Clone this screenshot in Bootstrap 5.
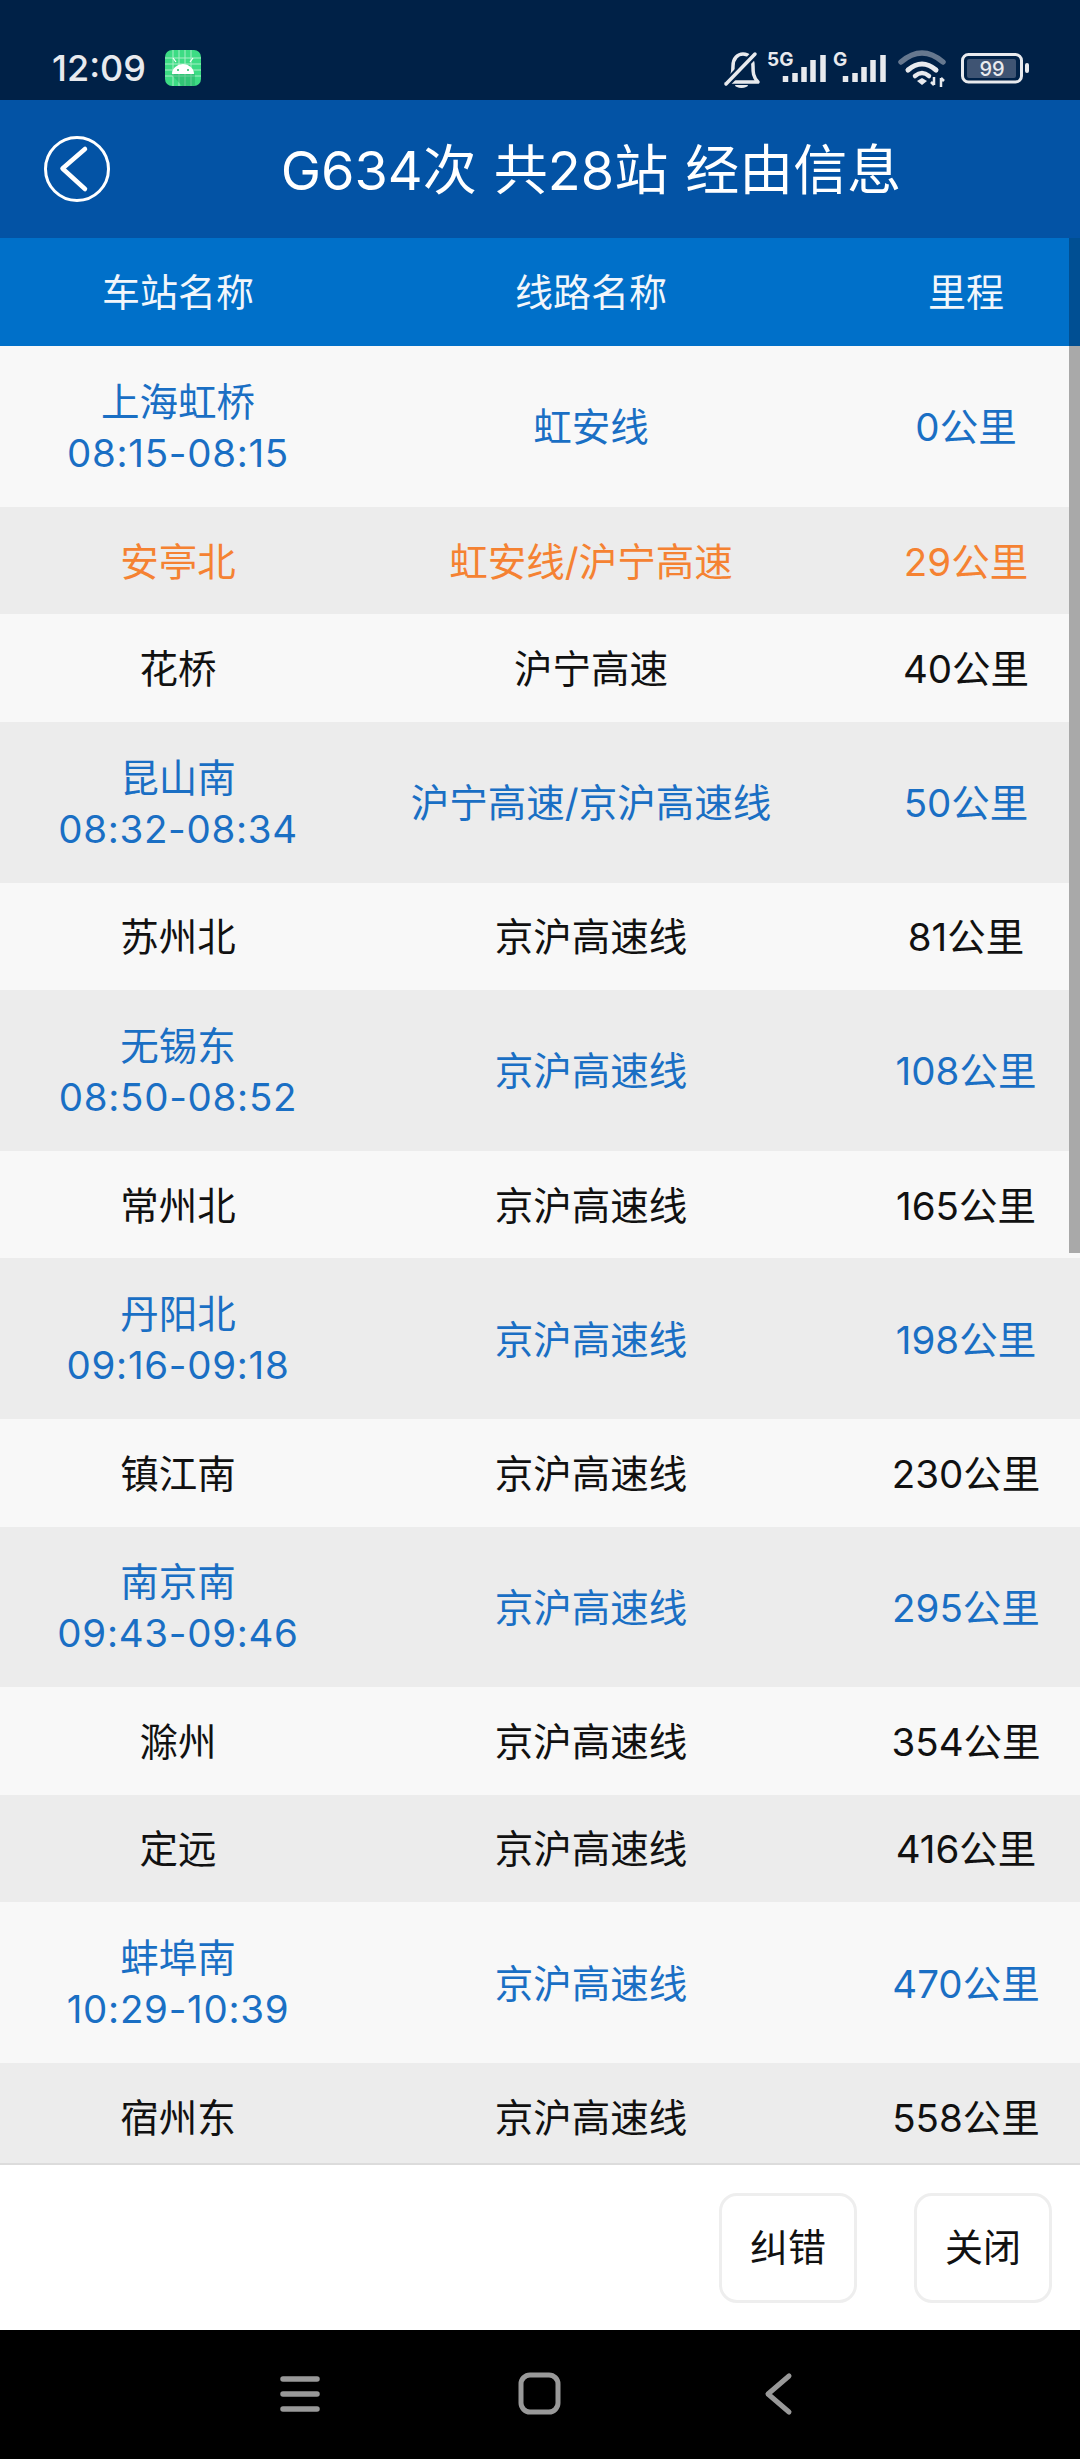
<!DOCTYPE html>
<html lang="zh-CN">
<head>
  <meta charset="UTF-8">
  <title>G634次 经由信息</title>
  <link href="https://cdn.jsdelivr.net/npm/bootstrap@5.3.3/dist/css/bootstrap.min.css" rel="stylesheet">
  <style>
    html, body {
      height: 2460px;
      overflow: hidden;
    }
    body {
      font-family: Inter, "Noto Sans CJK SC", sans-serif;
      background-color: #fff;
    }
    .phone-status {
      height: 100px;
      background-color: #002147;
      color: #e8eaee;
      padding: 50px 50px 0 52px;
    }
    .status-time {
      font-size: 36px;
      font-weight: 500;
      line-height: 36px;
      width: 113px;
    }
    .status-icons { margin-top: -10px; }
    .title-bar {
      height: 138px;
      background-color: #0353a5;
      color: #fff;
    }
    .back-btn {
      left: 44px;
      top: 36px;
    }
    .title-text {
      font-size: 54px;
      line-height: 142px;
      margin-left: 102px;
      word-spacing: 2px;
    }
    .col-station { width: 356px; }
    .col-line { width: 470px; }
    .col-miles { width: 254px; padding-left: 26px; padding-right: 0; }
    .head-row {
      height: 108px;
      background-color: #0070c9;
      color: #f2f6fb;
      font-size: 38px;
    }
    .stop-list {
      height: 1819px;
      font-size: 38.500px;
      line-height: 51px;
      color: #111;
      border-bottom: 2px solid #dcdcdc;
    }
    .stop-row { height: 107.400px; padding-top: 3px; background-color: #f8f8f8; }
    .stop-row:nth-child(even) { background-color: #ececec; }
    .stop-row.is-tall { height: 160.900px; color: #1a6fc4; }
    .stop-row.is-pass { color: #f58232; }
    .stop-time { letter-spacing: .7px; }
    .scroll-thumb {
      top: 0;
      right: 0;
      width: 11px;
      height: 1015px;
      background: linear-gradient(#004f93 108px, #a9a9a9 108px);
    }
    .foot-bar {
      height: 165px;
      padding-right: 28px;
      gap: 57px;
    }
    .foot-btn {
      width: 138px;
      height: 110px;
      font-size: 38px;
      color: #111;
      border: 3px solid #eee;
      border-radius: 18px;
      padding: 0;
    }
    .nav-strip {
      height: 129px;
      background-color: #000;
    }
  </style>
</head>
<body>

<!-- Status bar -->
<div class="phone-status d-flex align-items-start">
  <div class="status-time">12:09</div>
  <svg width="36" height="36" viewBox="0 0 36 36">
    <rect width="36" height="36" rx="7" fill="#3ddc84"/>
    <path d="M8 0V36M14 0V36M20 0V36M26 0V36M0 8H36M0 14H36M0 20H36M0 26H36" stroke="#a8efc6" stroke-width="1"/>
    <path d="M6 24H30L30 36H17Z" fill="#24a866" opacity=".45"/>
    <path d="M7 24A11 10 0 0 1 29 24Z" fill="#fff"/>
    <path d="M11 12L8 8M25 12L28 8" stroke="#fff" stroke-width="1.200"/>
    <circle cx="13" cy="20" r="1" fill="#2b6"/>
    <circle cx="23" cy="20" r="1" fill="#2b6"/>
  </svg>
  <svg class="status-icons ms-auto" width="310" height="60" viewBox="720 40 310 60" fill="none">
    <!-- muted bell -->
    <path d="M726 82C733 77 733 72 733 66C733 58 738 54 743 54C749 54 753 58 753 66C753 72 753 77 758 82Z" stroke="#e8eaee" stroke-width="3.500" stroke-linejoin="round"/>
    <path d="M726 84L757 52" stroke="#002147" stroke-width="8"/>
    <path d="M726 84L755 54" stroke="#e8eaee" stroke-width="3.500" stroke-linecap="round"/>
    <path d="M735 85H748A6.500 3 0 0 1 735 85Z" fill="#e8eaee"/>
    <!-- signal 1 -->
    <text x="767" y="66" fill="#e8eaee" font-family="Inter" font-weight="700" font-size="19">5G</text>
    <path d="M785.500 76V82M795 73V82M804 67V82M813 60V82M823 55V82" stroke="#e8eaee" stroke-width="5.500"/>
    <!-- signal 2 -->
    <text x="833" y="66" fill="#e8eaee" font-family="Inter" font-weight="700" font-size="19">G</text>
    <path d="M845.500 76V82M855 73V82M864 67V82M873 60V82M883 55V82" stroke="#e8eaee" stroke-width="5.500"/>
    <!-- wifi -->
    <path d="M901 62Q922 44 943 62" stroke="#66788f" stroke-width="5.500" stroke-linecap="round"/>
    <path d="M908 70Q922 58 936 70" stroke="#e8eaee" stroke-width="5" stroke-linecap="round"/>
    <path d="M915 76Q922 70 929 76" stroke="#e8eaee" stroke-width="4.500" stroke-linecap="round"/>
    <path d="M917 81L922 78L927 81L922 85Z" fill="#e8eaee"/>
    <path d="M934 77V85M931 82L934 85M941 87V78M941 78L944 81" stroke="#e8eaee" stroke-width="2.500"/>
    <!-- battery -->
    <rect x="962.500" y="54.500" width="59" height="27.500" rx="6" stroke="#e8eaee" stroke-width="3"/>
    <rect x="967" y="59" width="49" height="19" rx="2" fill="#3f5473"/>
    <text x="992" y="76" fill="#e8eaee" text-anchor="middle" font-family="Inter" font-weight="500" font-size="20">99</text>
    <rect x="1025" y="63" width="4" height="10" rx="2" fill="#e8eaee"/>
  </svg>
</div>

<!-- Title -->
<div class="title-bar position-relative text-center">
  <svg class="back-btn position-absolute" width="66" height="66" viewBox="0 0 66 66" fill="none" stroke="#fff">
    <circle cx="33" cy="33" r="31.500" stroke-width="3"/>
    <path d="M41 13L18.500 32.500L41 53" stroke-width="4.500" stroke-linecap="round" stroke-linejoin="round"/>
  </svg>
  <div class="title-text">G634次 共28站 经由信息</div>
</div>

<div class="position-relative">
  <!-- Table head -->
  <div class="head-row d-flex align-items-center text-center">
    <div class="col-station">车站名称</div>
    <div class="col-line">线路名称</div>
    <div class="col-miles">里程</div>
  </div>

  <!-- Stops -->
  <div class="stop-list overflow-hidden">
    <div class="stop-row is-tall d-flex align-items-center text-center">
      <div class="col-station">上海虹桥<br><span class="stop-time">08:15-08:15</span></div><div class="col-line">虹安线</div><div class="col-miles">0公里</div>
    </div>
    <div class="stop-row is-pass d-flex align-items-center text-center">
      <div class="col-station">安亭北</div><div class="col-line">虹安线/沪宁高速</div><div class="col-miles">29公里</div>
    </div>
    <div class="stop-row d-flex align-items-center text-center">
      <div class="col-station">花桥</div><div class="col-line">沪宁高速</div><div class="col-miles">40公里</div>
    </div>
    <div class="stop-row is-tall d-flex align-items-center text-center">
      <div class="col-station">昆山南<br><span class="stop-time">08:32-08:34</span></div><div class="col-line">沪宁高速/京沪高速线</div><div class="col-miles">50公里</div>
    </div>
    <div class="stop-row d-flex align-items-center text-center">
      <div class="col-station">苏州北</div><div class="col-line">京沪高速线</div><div class="col-miles">81公里</div>
    </div>
    <div class="stop-row is-tall d-flex align-items-center text-center">
      <div class="col-station">无锡东<br><span class="stop-time">08:50-08:52</span></div><div class="col-line">京沪高速线</div><div class="col-miles">108公里</div>
    </div>
    <div class="stop-row d-flex align-items-center text-center">
      <div class="col-station">常州北</div><div class="col-line">京沪高速线</div><div class="col-miles">165公里</div>
    </div>
    <div class="stop-row is-tall d-flex align-items-center text-center">
      <div class="col-station">丹阳北<br><span class="stop-time">09:16-09:18</span></div><div class="col-line">京沪高速线</div><div class="col-miles">198公里</div>
    </div>
    <div class="stop-row d-flex align-items-center text-center">
      <div class="col-station">镇江南</div><div class="col-line">京沪高速线</div><div class="col-miles">230公里</div>
    </div>
    <div class="stop-row is-tall d-flex align-items-center text-center">
      <div class="col-station">南京南<br><span class="stop-time">09:43-09:46</span></div><div class="col-line">京沪高速线</div><div class="col-miles">295公里</div>
    </div>
    <div class="stop-row d-flex align-items-center text-center">
      <div class="col-station">滁州</div><div class="col-line">京沪高速线</div><div class="col-miles">354公里</div>
    </div>
    <div class="stop-row d-flex align-items-center text-center">
      <div class="col-station">定远</div><div class="col-line">京沪高速线</div><div class="col-miles">416公里</div>
    </div>
    <div class="stop-row is-tall d-flex align-items-center text-center">
      <div class="col-station">蚌埠南<br><span class="stop-time">10:29-10:39</span></div><div class="col-line">京沪高速线</div><div class="col-miles">470公里</div>
    </div>
    <div class="stop-row d-flex align-items-center text-center">
      <div class="col-station">宿州东</div><div class="col-line">京沪高速线</div><div class="col-miles">558公里</div>
    </div>
  </div>

  <div class="scroll-thumb position-absolute"></div>
</div>

<!-- Buttons -->
<div class="foot-bar d-flex align-items-center justify-content-end">
  <button type="button" class="btn foot-btn">纠错</button>
  <button type="button" class="btn foot-btn">关闭</button>
</div>

<!-- Android nav -->
<div class="nav-strip">
  <svg width="1080" height="129" viewBox="0 2331 1080 129" fill="none" stroke="#999">
    <path d="M283 2380H317M283 2395H317M283 2410H317" stroke-width="5.500" stroke-linecap="round"/>
    <rect x="521" y="2376" width="37" height="37" rx="9" stroke-width="5"/>
    <path d="M789 2377L768 2395L789 2413" stroke-width="5" stroke-linecap="round" stroke-linejoin="round"/>
  </svg>
</div>

<script src="https://cdn.jsdelivr.net/npm/bootstrap@5.3.3/dist/js/bootstrap.bundle.min.js"></script>
</body>
</html>
